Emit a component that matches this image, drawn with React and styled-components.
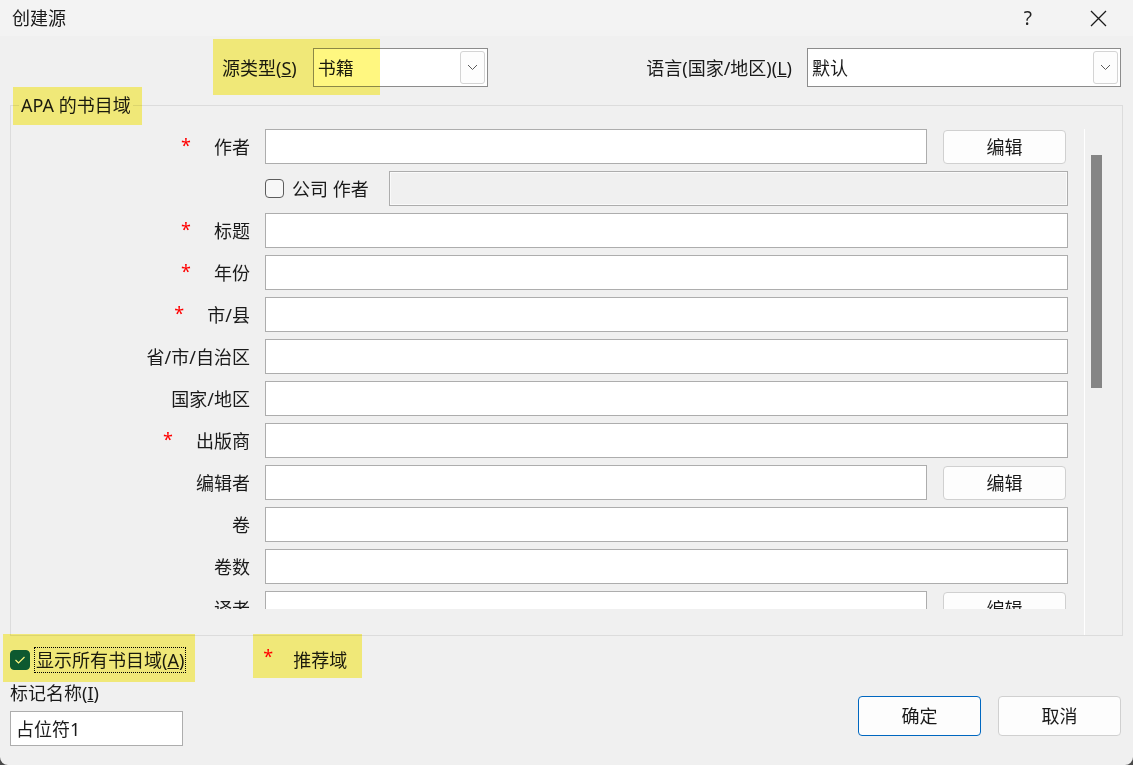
import React from "react";
import styled, { createGlobalStyle } from "styled-components";

const GlobalStyle = createGlobalStyle`
    html, body { margin: 0; padding: 0; background: #4a4a4a; }
    body {
        font-family: "Noto Sans", "Noto Sans CJK SC", sans-serif;
        font-size: 18px;
        color: #1a1a1a;
    }
    * { box-sizing: border-box; }
`;

const Dialog = styled.div`
    position: relative;
    width: 1133px;
    height: 765px;
    background: #f0f0f0;
    border-radius: 0 0 8px 8px;
    overflow: hidden;
    display: flex;
    flex-direction: column;
`;

const TitleBar = styled.div`
    height: 36px;
    flex: none;
    background: #f3f3f3;
    display: flex;
    align-items: center;
    padding: 0 26px 0 12px;
    line-height: 24px;

    .title { flex: 1; }
    .help { margin-right: 58px; font-size: 19px; color: #222; }
`;

const TopRow = styled.div`
    height: 57px;
    flex: none;
    display: flex;
    align-items: flex-start;
    padding: 12px 12px 0 222px;
`;

const FieldGroup = styled.div`
    display: flex;
    align-items: center;
    gap: ${(p) => p.$gap || 16}px;
    margin-left: ${(p) => (p.$push ? "auto" : "0")};
    line-height: 24px;
`;

const Select = styled.div`
    width: ${(p) => p.$width}px;
    height: 39px;
    background: #fff;
    border: 1px solid #8c8c8c;
    display: flex;
    align-items: center;
    padding: 2px 2px 2px 4px;
    line-height: 24px;

    .value { flex: 1; }
`;

const DropButton = styled.div`
    width: 25px;
    height: 33px;
    border: 1px solid #d4d4d4;
    border-radius: 3px;
    background: #fdfdfd;
    display: flex;
    align-items: center;
    justify-content: center;
`;

const GroupBox = styled.fieldset`
    margin: 0 10px;
    padding: 0;
    border: 1px solid #dcdcdc;
    min-inline-size: 0;
    flex: none;

    legend {
        margin-left: 8px;
        padding: 0 2px;
        line-height: 24px;
        height: 24px;
    }
`;

const GroupBody = styled.div`
    display: flex;
    height: 518px;
`;

const ScrollPane = styled.div`
    flex: 1;
    height: 492px;
    overflow: hidden;
    padding: 12px 16px 0 0;
`;

const ScrollTrack = styled.div`
    width: 38px;
    flex: none;
    margin-top: 12px;
    border-left: 1px solid #ffffff;
    padding: 26px 0 0 6px;
`;

const Thumb = styled.div`
    width: 11px;
    height: 233px;
    background: #858585;
`;

const FormGrid = styled.div`
    display: grid;
    grid-template-columns: 239px 1fr;
    column-gap: 15px;
    row-gap: 7px;
`;

const Label = styled.div`
    height: 35px;
    display: flex;
    align-items: center;
    justify-content: flex-end;
    white-space: nowrap;
    line-height: 24px;
`;

const Star = styled.span`
    color: #ff0000;
    width: 10px;
    text-align: center;
    margin-right: ${(p) => p.$gap || 23}px;
    position: relative;
    top: -2px;
`;

const Control = styled.div`
    display: flex;
    align-items: center;
    gap: ${(p) => p.$gap ?? 16}px;
    min-width: 0;
`;

const Input = styled.div`
    flex: ${(p) => (p.$width ? "none" : "1")};
    width: ${(p) => (p.$width ? `${p.$width}px` : "auto")};
    height: 35px;
    background: ${(p) => (p.$disabled ? "#f0f0f0" : "#fff")};
    border: 1px solid #adadad;
    box-shadow: ${(p) => (p.$disabled ? "inset 0 0 0 1px #fafafa" : "none")};
    padding: 0 5px;
    display: flex;
    align-items: center;
    line-height: 24px;
`;

const Button = styled.div`
    width: 123px;
    height: ${(p) => p.$height || 34}px;
    flex: none;
    margin-right: ${(p) => p.$inset || 0}px;
    background: #fdfdfd;
    border: 1px solid ${(p) => (p.$primary ? "#0067c0" : "#d0d0d0")};
    border-radius: 4px;
    display: flex;
    align-items: center;
    justify-content: center;
    line-height: 24px;
`;

const Box = styled.span`
    width: ${(p) => p.$size}px;
    height: ${(p) => p.$size}px;
    flex: none;
    border-radius: 4px;
    border: 1px solid ${(p) => (p.$checked ? "#0e5c5f" : "#5c5c5c")};
    background: ${(p) => (p.$checked ? "#0e5c5f" : "#f7f7f7")};
    display: flex;
    align-items: center;
    justify-content: center;
`;

const CompanyText = styled.span`
    margin: 0 20px 0 8px;
    white-space: nowrap;
    line-height: 24px;
`;

const Footer = styled.div`
    flex: 1;
    display: flex;
    flex-direction: column;
    padding: 11px 12px 19px 10px;
`;

const OptionRow = styled.div`
    display: flex;
    align-items: center;
    height: 26px;
    line-height: 24px;
`;

const FocusText = styled.span`
    margin-left: 4px;
    padding: 0 2px;
    outline: 1px dotted #000;
    outline-offset: -1px;
    line-height: 26px;
`;

const Note = styled.span`
    margin-left: 77px;
    display: flex;
    align-items: center;

    .star { color: #ff0000; position: relative; top: -4px; margin-right: 20px; }
`;

const BottomRow = styled.div`
    flex: 1;
    display: flex;
    align-items: flex-end;
    justify-content: space-between;
`;

const TagField = styled.div`
    display: flex;
    flex-direction: column;
    gap: 6px;
    line-height: 24px;
`;

const ButtonBar = styled.div`
    display: flex;
    gap: 17px;
    margin-bottom: 10px;
`;

const Mark = styled.div`
    position: absolute;
    left: ${(p) => p.$x}px;
    top: ${(p) => p.$y}px;
    width: ${(p) => p.$w}px;
    height: ${(p) => p.$h}px;
    background: #fff780;
    mix-blend-mode: multiply;
    pointer-events: none;
`;

const Chevron = () => (
    <svg width="11" height="7" viewBox="0 0 11 7">
        <path d="M1 1 L5.5 5.5 L10 1" fill="none" stroke="#5a5a5a" strokeWidth="1" />
    </svg>
);

const CloseIcon = () => (
    <svg width="17" height="17" viewBox="0 0 17 17">
        <path d="M1 1 L16 16 M16 1 L1 16" stroke="#1a1a1a" strokeWidth="1.3" />
    </svg>
);

const fields = [
    { label: "作者", required: true, edit: true },
    { company: true },
    { label: "标题", required: true },
    { label: "年份", required: true },
    { label: "市/县", required: true },
    { label: "省/市/自治区" },
    { label: "国家/地区" },
    { label: "出版商", required: true },
    { label: "编辑者", edit: true },
    { label: "卷" },
    { label: "卷数" },
    { label: "译者", edit: true },
];

const FieldRow = ({ field }) => {
    if (field.company) {
        return (
            <>
                <Label />
                <Control $gap={0}>
                    <Box $size={19} />
                    <CompanyText>公司 作者</CompanyText>
                    <Input $disabled />
                </Control>
            </>
        );
    }
    return (
        <>
            <Label>
                {field.required && <Star>*</Star>}
                {field.label}
            </Label>
            <Control>
                <Input />
                {field.edit && <Button $inset={2}>编辑</Button>}
            </Control>
        </>
    );
};

const App = () => (
    <Dialog>
        <GlobalStyle />
        <TitleBar>
            <span className="title">创建源</span>
            <span className="help">?</span>
            <CloseIcon />
        </TitleBar>

        <TopRow>
            <FieldGroup>
                <span>源类型(<u>S</u>)</span>
                <Select $width={175}>
                    <span className="value">书籍</span>
                    <DropButton><Chevron /></DropButton>
                </Select>
            </FieldGroup>
            <FieldGroup $push $gap={15}>
                <span>语言(国家/地区)(<u>L</u>)</span>
                <Select $width={314}>
                    <span className="value">默认</span>
                    <DropButton><Chevron /></DropButton>
                </Select>
            </FieldGroup>
        </TopRow>

        <GroupBox>
            <legend>APA 的书目域</legend>
            <GroupBody>
                <ScrollPane>
                    <FormGrid>
                        {fields.map((f, i) => (
                            <FieldRow key={i} field={f} />
                        ))}
                    </FormGrid>
                </ScrollPane>
                <ScrollTrack>
                    <Thumb />
                </ScrollTrack>
            </GroupBody>
        </GroupBox>

        <Footer>
            <OptionRow>
                <Box $size={20} $checked>
                    <svg width="12" height="10" viewBox="0 0 12 10">
                        <path d="M1.5 5 L4.5 8 L10.5 2" fill="none" stroke="#ffffff" strokeWidth="1.2" />
                    </svg>
                </Box>
                <FocusText>显示所有书目域(<u>A</u>)</FocusText>
                <Note>
                    <span className="star">*</span>
                    推荐域
                </Note>
            </OptionRow>
            <BottomRow>
                <TagField>
                    <span>标记名称(<u>I</u>)</span>
                    <Input $width={173}>占位符1</Input>
                </TagField>
                <ButtonBar>
                    <Button $primary $height={40}>确定</Button>
                    <Button $height={40}>取消</Button>
                </ButtonBar>
            </BottomRow>
        </Footer>

        <Mark $x={213} $y={39} $w={167} $h={56} />
        <Mark $x={13} $y={87} $w={129} $h={38} />
        <Mark $x={3} $y={634} $w={192} $h={48} />
        <Mark $x={253} $y={634} $w={109} $h={44} />
    </Dialog>
);

export default App;
